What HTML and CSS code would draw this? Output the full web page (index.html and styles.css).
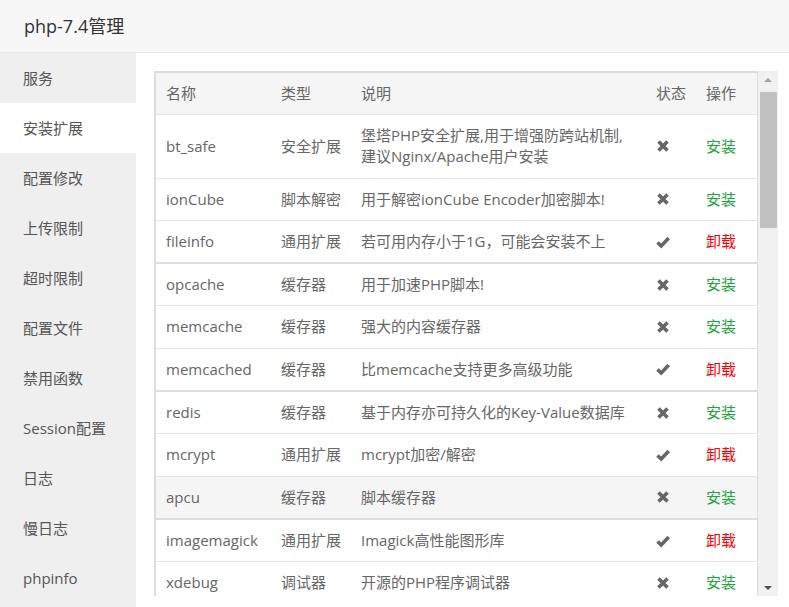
FILE: index.html
```html
<!DOCTYPE html>
<html lang="zh-CN">
<head>
    <meta charset="UTF-8">
    <title>php-7.4管理</title>
    <link rel="stylesheet" href="styles.css">
</head>
<body>
    <!-- Title Bar -->
    <div class="title-bar">php-7.4管理</div>

    <div class="layout">
        <!-- Side Menu -->
        <ul class="side-menu">
            <li>服务</li>
            <li class="active">安装扩展</li>
            <li>配置修改</li>
            <li>上传限制</li>
            <li>超时限制</li>
            <li>配置文件</li>
            <li>禁用函数</li>
            <li>Session配置</li>
            <li>日志</li>
            <li>慢日志</li>
            <li>phpinfo</li>
        </ul>

        <!-- Extension List -->
        <div class="main">
            <div class="ext-box">
                <div class="table-wrap">
                    <table class="ext-table">
                        <thead>
                            <tr>
                                <th class="col-name">名称</th>
                                <th class="col-type">类型</th>
                                <th class="col-desc">说明</th>
                                <th class="col-status">状态</th>
                                <th class="col-op">操作</th>
                            </tr>
                        </thead>
                        <tbody>
                            <tr>
                                <td>bt_safe</td>
                                <td>安全扩展</td>
                                <td>堡塔PHP安全扩展,用于增强防跨站机制,建议Nginx/Apache用户安装</td>
                                <td><svg class="icon" viewBox="0 0 14 14"><path d="M2.5 2.5 L11.5 11.5 M11.5 2.5 L2.5 11.5"/></svg></td>
                                <td><a class="btn-install">安装</a></td>
                            </tr>
                            <tr>
                                <td>ionCube</td>
                                <td>脚本解密</td>
                                <td>用于解密ionCube Encoder加密脚本!</td>
                                <td><svg class="icon" viewBox="0 0 14 14"><path d="M2.5 2.5 L11.5 11.5 M11.5 2.5 L2.5 11.5"/></svg></td>
                                <td><a class="btn-install">安装</a></td>
                            </tr>
                            <tr class="group-end">
                                <td>fileinfo</td>
                                <td>通用扩展</td>
                                <td>若可用内存小于1G，可能会安装不上</td>
                                <td><svg class="icon" viewBox="0 0 14 14"><path d="M1.5 7.5 L5.2 11 L12.8 3"/></svg></td>
                                <td><a class="btn-remove">卸载</a></td>
                            </tr>
                            <tr>
                                <td>opcache</td>
                                <td>缓存器</td>
                                <td>用于加速PHP脚本!</td>
                                <td><svg class="icon" viewBox="0 0 14 14"><path d="M2.5 2.5 L11.5 11.5 M11.5 2.5 L2.5 11.5"/></svg></td>
                                <td><a class="btn-install">安装</a></td>
                            </tr>
                            <tr>
                                <td>memcache</td>
                                <td>缓存器</td>
                                <td>强大的内容缓存器</td>
                                <td><svg class="icon" viewBox="0 0 14 14"><path d="M2.5 2.5 L11.5 11.5 M11.5 2.5 L2.5 11.5"/></svg></td>
                                <td><a class="btn-install">安装</a></td>
                            </tr>
                            <tr class="group-end">
                                <td>memcached</td>
                                <td>缓存器</td>
                                <td>比memcache支持更多高级功能</td>
                                <td><svg class="icon" viewBox="0 0 14 14"><path d="M1.5 7.5 L5.2 11 L12.8 3"/></svg></td>
                                <td><a class="btn-remove">卸载</a></td>
                            </tr>
                            <tr>
                                <td>redis</td>
                                <td>缓存器</td>
                                <td>基于内存亦可持久化的Key-Value数据库</td>
                                <td><svg class="icon" viewBox="0 0 14 14"><path d="M2.5 2.5 L11.5 11.5 M11.5 2.5 L2.5 11.5"/></svg></td>
                                <td><a class="btn-install">安装</a></td>
                            </tr>
                            <tr>
                                <td>mcrypt</td>
                                <td>通用扩展</td>
                                <td>mcrypt加密/解密</td>
                                <td><svg class="icon" viewBox="0 0 14 14"><path d="M1.5 7.5 L5.2 11 L12.8 3"/></svg></td>
                                <td><a class="btn-remove">卸载</a></td>
                            </tr>
                            <tr class="group-end hover">
                                <td>apcu</td>
                                <td>缓存器</td>
                                <td>脚本缓存器</td>
                                <td><svg class="icon" viewBox="0 0 14 14"><path d="M2.5 2.5 L11.5 11.5 M11.5 2.5 L2.5 11.5"/></svg></td>
                                <td><a class="btn-install">安装</a></td>
                            </tr>
                            <tr>
                                <td>imagemagick</td>
                                <td>通用扩展</td>
                                <td>Imagick高性能图形库</td>
                                <td><svg class="icon" viewBox="0 0 14 14"><path d="M1.5 7.5 L5.2 11 L12.8 3"/></svg></td>
                                <td><a class="btn-remove">卸载</a></td>
                            </tr>
                            <tr>
                                <td>xdebug</td>
                                <td>调试器</td>
                                <td>开源的PHP程序调试器</td>
                                <td><svg class="icon" viewBox="0 0 14 14"><path d="M2.5 2.5 L11.5 11.5 M11.5 2.5 L2.5 11.5"/></svg></td>
                                <td><a class="btn-install">安装</a></td>
                            </tr>
                        </tbody>
                    </table>
                </div>

                <!-- Scrollbar -->
                <div class="scrollbar">
                    <div class="sb-btn"><span class="arrow-up"></span></div>
                    <div class="sb-track"><div class="sb-thumb"></div></div>
                    <div class="sb-btn"><span class="arrow-down"></span></div>
                </div>
            </div>
        </div>
    </div>
</body>
</html>
```

FILE: styles.css
```css
/* General Styles */
body {
    margin: 0;
    padding: 0;
    font-family: 'Open Sans', 'Noto Sans CJK SC', sans-serif;
    font-size: 15px;
    color: #666;
    background-color: #fff;
    overflow: hidden;
}

/* Title Bar */
.title-bar {
    height: 52px;
    line-height: 52px;
    padding-left: 24px;
    font-size: 18px;
    color: #333;
    background-color: #f7f7f7;
    border-bottom: 1px solid #e6e6e6;
}

.layout {
    display: flex;
    height: 554px;
}

/* Side Menu */
.side-menu {
    list-style: none;
    margin: 0;
    padding: 0;
    width: 136px;
    background-color: #efefef;
}

.side-menu li {
    height: 50px;
    line-height: 50px;
    padding-left: 23px;
    color: #555;
}

.side-menu li.active {
    background-color: #fff;
}

/* Main */
.main {
    flex: 1;
    padding: 18px 11px 0 18px;
}

.ext-box {
    display: flex;
    height: 525px;
}

.table-wrap {
    flex: 1;
    overflow: hidden;
    border-top: 2px solid #ddd;
    border-left: 2px solid #ddd;
    border-right: 1px solid #ddd;
}

.ext-table {
    width: 100%;
    border-collapse: collapse;
    table-layout: fixed;
}

.ext-table th,
.ext-table td {
    padding: 10px 10px;
    line-height: 21.3px;
    text-align: left;
    font-weight: normal;
    vertical-align: middle;
    border-bottom: 1px solid #e6e6e6;
}

.ext-table th {
    line-height: 21px;
    background-color: #f5f5f5;
}

.ext-table .col-name { width: 95px; }
.ext-table .col-type { width: 60px; }
.ext-table .col-status { width: 30px; }
.ext-table .col-op { width: 41px; }

.ext-table tr.group-end td {
    border-bottom: 2px solid #dedede;
}

.ext-table tr.hover td {
    background-color: #f5f5f5;
}

.icon {
    display: block;
    width: 14px;
    height: 14px;
    fill: none;
    stroke: #666;
    stroke-width: 3.6;
}

.btn-install {
    color: #20a53a;
}

.btn-remove {
    color: #f00;
}

/* Scrollbar */
.scrollbar {
    width: 20px;
    display: flex;
    flex-direction: column;
    background-color: #f1f1f1;
}

.sb-btn {
    height: 17px;
    display: flex;
    justify-content: center;
    align-items: center;
}

.sb-track {
    flex: 1;
    padding-top: 4px;
}

.sb-thumb {
    height: 136px;
    margin: 0 1px 0 2px;
    background-color: #c1c1c1;
}

.arrow-up {
    width: 0;
    height: 0;
    border-left: 4px solid transparent;
    border-right: 4px solid transparent;
    border-bottom: 4px solid #a3a3a3;
}

.arrow-down {
    width: 0;
    height: 0;
    border-left: 4px solid transparent;
    border-right: 4px solid transparent;
    border-top: 4px solid #505050;
}
```
